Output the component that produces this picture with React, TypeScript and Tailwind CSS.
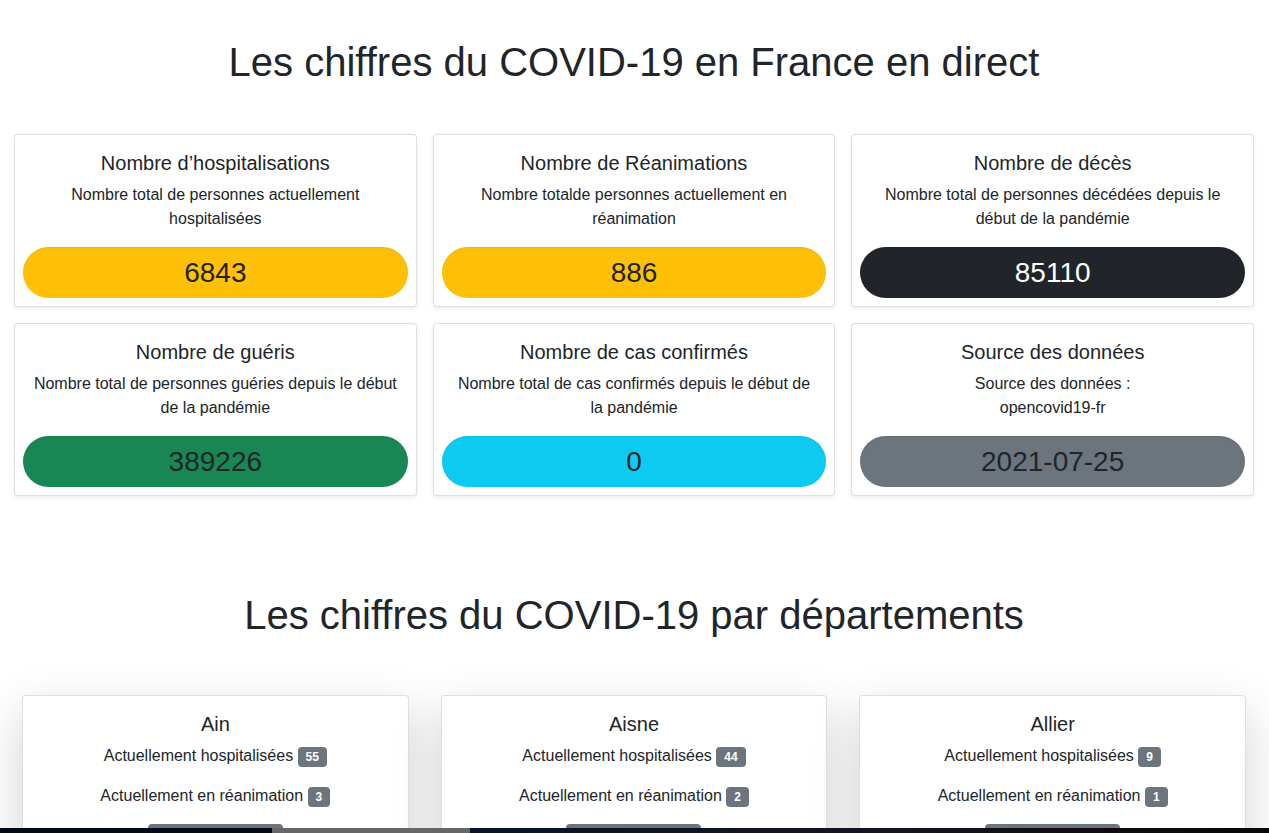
type Stat = {
  title: string;
  text: string[];
  value: string;
  tone: string;
};

type Department = {
  name: string;
  hospitalised: number;
  intensiveCare: number;
};

const stats: Stat[] = [
  {
    title: "Nombre d’hospitalisations",
    text: ["Nombre total de personnes actuellement hospitalisées"],
    value: "6843",
    tone: "bg-[#ffc107] text-[#212529]",
  },
  {
    title: "Nombre de Réanimations",
    text: ["Nombre totalde personnes actuellement en réanimation"],
    value: "886",
    tone: "bg-[#ffc107] text-[#212529]",
  },
  {
    title: "Nombre de décès",
    text: ["Nombre total de personnes décédées depuis le début de la pandémie"],
    value: "85110",
    tone: "bg-[#212529] text-white",
  },
  {
    title: "Nombre de guéris",
    text: ["Nombre total de personnes guéries depuis le début de la pandémie"],
    value: "389226",
    tone: "bg-[#198754] text-[#212529]",
  },
  {
    title: "Nombre de cas confirmés",
    text: ["Nombre total de cas confirmés depuis le début de la pandémie"],
    value: "0",
    tone: "bg-[#0dcaf0] text-[#212529]",
  },
  {
    title: "Source des données",
    text: ["Source des données :", "opencovid19-fr"],
    value: "2021-07-25",
    tone: "bg-[#6c757d] text-[#212529]",
  },
];

const departments: Department[] = [
  { name: "Ain", hospitalised: 55, intensiveCare: 3 },
  { name: "Aisne", hospitalised: 44, intensiveCare: 2 },
  { name: "Allier", hospitalised: 9, intensiveCare: 1 },
];

function Badge({ value }: { value: number }) {
  return (
    <span className="inline-block rounded bg-[#6c757d] px-2 py-1 align-baseline text-xs leading-none font-bold text-white">
      {value}
    </span>
  );
}

function StatCard({ stat }: { stat: Stat }) {
  return (
    <article className="flex flex-col rounded border border-black/[.125] bg-white shadow-[0_2px_4px_rgba(0,0,0,0.075)]">
      <div className="flex-1 p-4">
        <h2 className="mb-2 text-xl leading-6">{stat.title}</h2>
        <p className="text-base leading-6">
          {stat.text.map((line) => (
            <span key={line} className="block">
              {line}
            </span>
          ))}
        </p>
      </div>
      <div
        className={`mx-2 mb-2 rounded-full py-2 text-[28px] leading-[35px] shadow-[inset_0_1px_2px_rgba(0,0,0,0.075)] ${stat.tone}`}
      >
        {stat.value}
      </div>
    </article>
  );
}

function DepartmentCard({ department }: { department: Department }) {
  return (
    <article className="rounded border border-black/[.125] bg-white p-4 shadow-[0_16px_48px_rgba(0,0,0,0.175)]">
      <h2 className="mb-2 text-xl leading-6">{department.name}</h2>
      <p className="mb-4 h-6 text-base leading-6">
        Actuellement hospitalisées <Badge value={department.hospitalised} />
      </p>
      <p className="mb-4 h-6 text-base leading-6">
        Actuellement en réanimation <Badge value={department.intensiveCare} />
      </p>
      <button
        type="button"
        aria-label={`Plus de détails : ${department.name}`}
        className="h-[38px] w-[135px] rounded bg-[#6c757d]"
      />
    </article>
  );
}

export default function App() {
  return (
    <div className="flex h-screen flex-col bg-white font-['Liberation_Sans',Arial,sans-serif] text-[#212529]">
      <main className="min-h-0 flex-1 overflow-hidden pr-[15px] pl-[14px] text-center">
        <section className="pt-[38px]">
          <h1 className="mb-12 text-[40px] leading-[48px]">
            Les chiffres du COVID-19 en France en direct
          </h1>
          <div className="grid grid-cols-3 gap-4">
            {stats.map((stat) => (
              <StatCard key={stat.title} stat={stat} />
            ))}
          </div>
        </section>
        <section className="px-2 pt-[95px]">
          <h1 className="mb-14 text-[40px] leading-[48px]">
            Les chiffres du COVID-19 par départements
          </h1>
          <div className="grid grid-cols-3 gap-8">
            {departments.map((department) => (
              <DepartmentCard key={department.name} department={department} />
            ))}
          </div>
        </section>
      </main>
      <footer className="relative flex h-[5px] shrink-0">
        <div className="w-[272px] bg-[#010a18]" />
        <div className="w-[198px] bg-[#666666]" />
        <div className="flex-1 bg-linear-to-r from-[#071426] via-[#141420] to-[#0c0609]" />
      </footer>
    </div>
  );
}
